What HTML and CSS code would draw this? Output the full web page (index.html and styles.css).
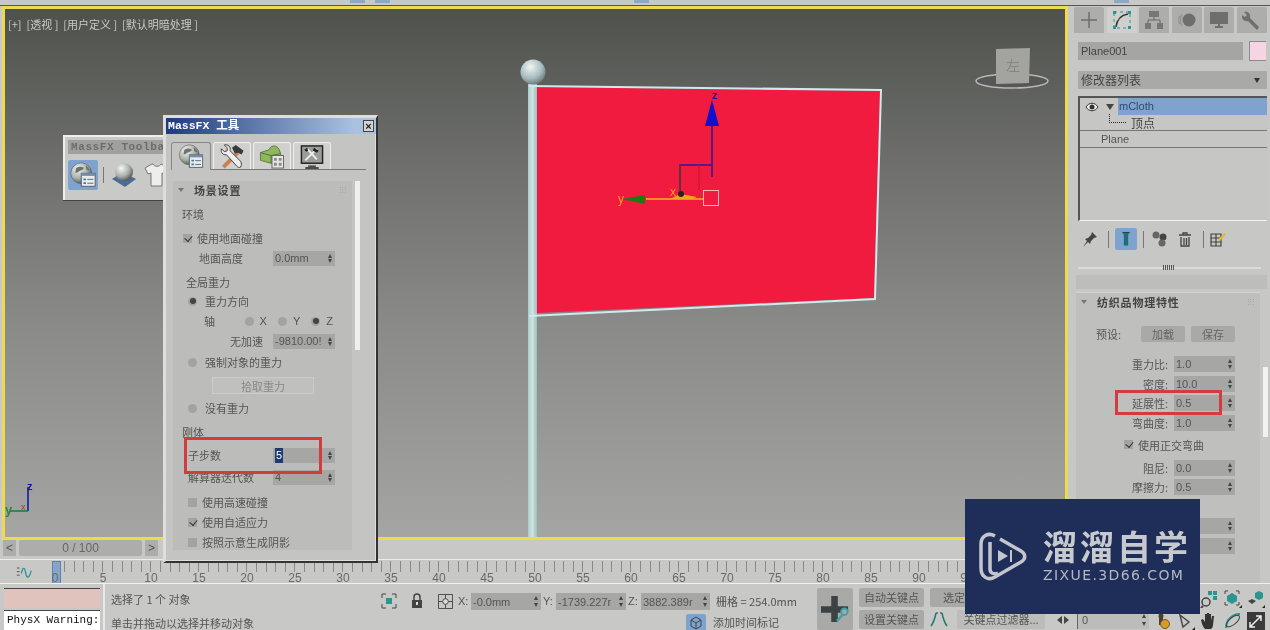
FILE: index.html
```html
<!DOCTYPE html>
<html lang="zh">
<head>
<meta charset="utf-8">
<title>3ds Max MassFX</title>
<link rel="stylesheet" href="styles.css">
</head>
<body>
<svg class="sprite" aria-hidden="true">
  <defs>
    <radialGradient id="gGlobe" cx="35%" cy="30%" r="75%"><stop offset="0" stop-color="#f6f6f4"/><stop offset=".6" stop-color="#a8aea8"/><stop offset="1" stop-color="#4a544e"/></radialGradient>
    <radialGradient id="gBall" cx="40%" cy="30%" r="75%"><stop offset="0" stop-color="#f0f4f4"/><stop offset=".6" stop-color="#a9bcc0"/><stop offset="1" stop-color="#5f7276"/></radialGradient>
    <symbol id="i-globe" viewBox="0 0 30 30">
      <circle cx="13" cy="13" r="12" fill="url(#gGlobe)" stroke="#555" stroke-width=".6"/>
      <path d="M7 7c3-2 6-2 8-1s0 3-3 4-3 3-6 2zM18 4c2 1 4 3 5 6l-4-1z" fill="#6c756c"/>
      <rect x="13" y="13" width="16" height="15" fill="#e8ecef" stroke="#4a5560"/>
      <rect x="13" y="13" width="16" height="3" fill="#6f8db0"/>
      <path d="M15.500 19h3v2h-3zM15.500 23.500h3v2h-3z" fill="#3f7f96"/>
      <path d="M20 20h7M20 24.500h7" stroke="#4a5560"/>
    </symbol>
    <symbol id="i-tools" viewBox="0 0 26 26">
      <path d="M4 24l15-15" stroke="#c87f55" stroke-width="4"/>
      <path d="M13 4l4-3 8 6-2 4-4-2-3 1z" fill="#3a3a3a"/>
      <path d="M22 24c-2 1-3 0-4-1L7 11C4 12 1 9 2 5l3 3 3-1 0-3-3-3c4-1 7 2 6 6l11 11c1 2 1 4 0 6z" fill="#eceeee" stroke="#3a3a3a"/>
    </symbol>
    <symbol id="i-shapes" viewBox="0 0 26 26">
      <path d="M1 9l9-3c1-4 7-6 10-1l2 5v7l-10 3-11-3z" fill="#8fb85c" stroke="#5f7a3c"/>
      <path d="M1 9l11 3 10-2M12 12v8" stroke="#55703a" fill="none"/>
      <rect x="13" y="12" width="12" height="13" fill="#e6e6e4" stroke="#666"/>
      <path d="M15 14.500h3v3h-3zM20 14.500h3v3h-3zM15 19.500h3v3h-3zM20 19.500h3v3h-3z" fill="#8b8b89"/>
    </symbol>
    <symbol id="i-monitor" viewBox="0 0 26 26">
      <rect x="2" y="2" width="22" height="18" fill="#9a9c98" stroke="#222" stroke-width="1.500"/>
      <path d="M6 17l12-12M8 5l10 11" stroke="#eee" stroke-width="2"/>
      <path d="M15 4l5 3-2 2-4-2zM5 6l3-2 1 3-2 1z" fill="#222"/>
      <path d="M9 23h8M6 25h14" stroke="#222" stroke-width="1.500"/>
    </symbol>
    <symbol id="i-shirt" viewBox="0 0 24 26">
      <path d="M8 2L1 6l3 6 3-1v13h11V11l3 1 3-6-7-4c-1 3-7 3-8 0z" fill="#eeeeea" stroke="#777"/>
    </symbol>
    <symbol id="i-floor" viewBox="0 0 26 26">
      <path d="M1 17l11-7 13 7-11 8z" fill="#4c6c96"/>
      <circle cx="13" cy="10" r="9" fill="url(#gGlobe)"/>
    </symbol>
    <symbol id="i-move" viewBox="0 0 16 16"><path d="M1 1h4M1 1v4M15 1h-4M15 1v4M1 15h4M1 15v-4M15 15h-4M15 15v-4" stroke="#444" fill="none"/><rect x="5" y="5" width="6" height="6" fill="#2b9590"/></symbol>
  </defs>
</svg>

<div class="app">
  <div class="topbar">
    <i class="hl hl1"></i><i class="hl hl2"></i><i class="hl hl3"></i><i class="hl hl4"></i>
  </div>

  <div class="work">
    <div class="leftcol">
      <main class="viewport">
        <div class="vp-label">[+]&nbsp; [透视 ]&nbsp; [用户定义 ]&nbsp; [默认明暗处理 ]</div>
        <svg class="scene" viewBox="5 9 1060 528">
          <defs>
            <linearGradient id="gPole" x1="0" x2="1" y1="0" y2="0"><stop offset="0" stop-color="#a9cdcd"/><stop offset=".5" stop-color="#d0e4e2"/><stop offset="1" stop-color="#9dbdbd"/></linearGradient>
          </defs>
          <rect x="528" y="84" width="9" height="460" fill="url(#gPole)"/>
          <circle cx="533" cy="72" r="12.500" fill="url(#gBall)"/>
          <polygon points="537,87 880,91 874,298 537,313" fill="#f01b3e"/>
          <path d="M529 86l352 4-6 209-346 17" fill="none" stroke="#cfe9f0" stroke-width="2"/>
          <path d="M712 126v51M680 191v-26h32" stroke="#2a1a9a" stroke-width="1.500" fill="none"/>
          <path d="M680 165v26" stroke="#6b3a20" stroke-width="1.500"/>
          <path d="M699 165v25" stroke="#c8132e"/>
          <polygon points="712,100 705,126 719,126" fill="#1010d0"/>
          <text x="712" y="99" class="g-z">z</text>
          <path d="M646 199h57" stroke="#f3b21e" stroke-width="1.500"/>
          <polygon points="670,199 680,194 697,197 692,199" fill="#f3a31e"/>
          <polygon points="622,199 645,195 645,204" fill="#1a7a14"/>
          <circle cx="681" cy="194" r="3" fill="#222"/>
          <rect x="703.500" y="190.500" width="15" height="15" fill="none" stroke="#f2bcb4"/>
          <text x="618" y="203" class="g-o">y</text>
          <text x="670" y="196" class="g-o">x</text>
          <ellipse cx="1012" cy="81" rx="36" ry="7" fill="#575757" stroke="#b8b8b4" stroke-width="1.500"/>
          <path d="M996 49l34 -1-1 35-33 1z" fill="#a3a39f"/>
          <text x="1006" y="71" class="g-cube">左</text>
          <path d="M28 511v-24" stroke="#1111aa" stroke-width="1.500"/>
          <path d="M28 511H9" stroke="#1a7a3a" stroke-width="1.500"/>
          <text x="27" y="490" class="g-ax">z</text>
          <text x="5" y="514" class="g-ay">y</text>
          <text x="21" y="510" class="g-ar">x</text>
        </svg>
      </main>
      <div class="slider">
        <span class="sl-btn">&lt;</span>
        <span class="sl-track">0 / 100</span>
        <span class="sl-btn">&gt;</span>
      </div>
      <div class="ruler">
        <svg class="curve" viewBox="0 0 18 14"><path d="M1 2h3M1 6h3M1 10h3" stroke="#444"/><path d="M6 8c2-9 4-6 5 0s4 6 6-3" stroke="#2b9590" fill="none" stroke-width="1.500"/></svg>
        <i class="frame"></i>
        <div class="ticks"></div>
        <div class="nums"><span>0</span><span>5</span><span>10</span><span>15</span><span>20</span><span>25</span><span>30</span><span>35</span><span>40</span><span>45</span><span>50</span><span>55</span><span>60</span><span>65</span><span>70</span><span>75</span><span>80</span><span>85</span><span>90</span><span>95</span></div>
      </div>
    </div>

    <aside class="panel">
      <div class="ptabs">
        <span class="ptab"><svg viewBox="0 0 20 20"><path d="M10 2v16M2 10h16" stroke="#6e6e6c" stroke-width="1.500"/></svg></span>
        <span class="ptab on"><svg viewBox="0 0 20 20"><path d="M2 2h16v16H2z" fill="none" stroke="#2b9590" stroke-dasharray="3 3"/><path d="M4 17C5 9 9 5 16 4" stroke="#333" stroke-width="1.500" fill="none"/><path d="M1 1h3v3H1zM16 1h3v3h-3zM1 16h3v3H1zM16 16h3v3h-3z" fill="#2b9590"/></svg></span>
        <span class="ptab"><svg viewBox="0 0 20 20"><path d="M5 1h10v6H5zM1 13h6v6H1zM13 13h6v6h-6z" fill="#777"/><path d="M10 7v3M4 13v-3h12v3" stroke="#666" fill="none"/></svg></span>
        <span class="ptab"><svg viewBox="0 0 20 20"><circle cx="12" cy="10" r="6.500" fill="#6e6e6c"/><path d="M5 4c-2 4-2 8 0 12M2.500 6c-1 3-1 6 0 8" stroke="#8a8a88" fill="none"/></svg></span>
        <span class="ptab"><svg viewBox="0 0 20 20"><rect x="1" y="2" width="18" height="12" fill="#6e6e6c"/><path d="M6 17h8M10 14v3" stroke="#6e6e6c" stroke-width="2"/></svg></span>
        <span class="ptab"><svg viewBox="0 0 20 20"><path d="M17 17L8 8c1-4-2-7-6-6l3 3-2 2-3-2c-1 4 3 7 6 6l9 9z" fill="#6e6e6c"/></svg></span>
      </div>

      <div class="namerow"><span class="namefield">Plane001</span><span class="swatch"></span></div>
      <div class="modlist"><span>修改器列表</span><i class="caret"></i></div>

      <div class="stack">
        <div class="st-row st-top">
          <svg class="eye" viewBox="0 0 14 10"><path d="M1 5c3-5 9-5 12 0-3 5-9 5-12 0z" fill="#eee" stroke="#333"/><circle cx="7" cy="5" r="2.500" fill="#333"/></svg>
          <i class="tri"></i>
          <span class="st-sel">mCloth</span>
        </div>
        <div class="st-row st-sub"><i class="dots"></i><span>顶点</span></div>
        <div class="st-row st-plane">Plane</div>
      </div>

      <div class="ptools">
        <svg class="pt-pin" viewBox="0 0 16 16"><path d="M10 1l5 5-3 1-3 3-1 3-2-2-5 5 4-6-2-2 3-1 3-3z" fill="#444"/></svg>
        <i class="vsep"></i>
        <span class="ptool-on"><svg viewBox="0 0 16 22"><path d="M3 2h10l-2 3v15H5V5z" fill="#1f6f72"/><path d="M3 2h10" stroke="#222"/></svg></span>
        <i class="vsep"></i>
        <svg class="pt-c" viewBox="0 0 16 16"><circle cx="4" cy="4" r="3.500" fill="#666"/><circle cx="11" cy="6" r="3.500" fill="#444"/><circle cx="10" cy="12" r="3.500" fill="#666"/></svg>
        <svg class="pt-t" viewBox="0 0 16 16"><path d="M2 4h12M6 4V2h4v2M4 6v9h8V6M7 7v7M9.500 7v7" stroke="#444" fill="none" stroke-width="1.300"/></svg>
        <i class="vsep vsep-e"></i>
        <svg viewBox="0 0 16 16"><path d="M1 3h10v12H1zM1 7h10M1 11h10M6 3v12" stroke="#444" fill="none" stroke-width="1.200"/><path d="M8 9l6-7 2 1-6 7z" fill="#e6b91e"/></svg>
      </div>

      <div class="handle"><i></i></div>
      <div class="rollstub"></div>

      <div class="scroller">
        <section class="props">
          <h3 class="roll-h"><i class="tri-s"></i>纺织品物理特性<i class="grip"></i></h3>
          <div class="preset"><span>预设:</span><button class="pbtn">加载</button><button class="pbtn">保存</button></div>
          <div class="pgrid">
            <label>重力比:</label><span class="spin">1.0</span>
            <label>密度:</label><span class="spin">10.0</span>
            <label>延展性:</label><span class="spin">0.5</span>
            <label>弯曲度:</label><span class="spin">1.0</span>
            <div class="pcheck"><i class="chk on"></i>使用正交弯曲</div>
            <label>阻尼:</label><span class="spin">0.0</span>
            <label>摩擦力:</label><span class="spin">0.5</span>
            <label></label><span class="spin"></span>
            <label></label><span class="spin"></span>
          </div>
        </section>
        <i class="sbar"></i>
      </div>
      <i class="redbox redbox-panel"></i>
    </aside>
  </div>

  <footer class="status">
    <div class="logs"><div class="pink"></div><div class="warn">PhysX Warning:</div></div>
    <div class="msgs"><div>选择了 1 个 对象</div><div>单击并拖动以选择并移动对象</div></div>
    <div class="coords">
      <div class="c-top">
        <svg class="ic14 c-sel"><use href="#i-move"/></svg>
        <svg class="c-lock" viewBox="0 0 12 16"><path d="M3 7V4a3 3 0 0 1 6 0v3" fill="none" stroke="#444" stroke-width="1.500"/><rect x="1" y="7" width="10" height="8" fill="#444"/><rect x="5" y="9" width="2" height="3" fill="#ddd"/></svg>
        <svg class="c-abs" viewBox="0 0 16 16"><path d="M.5.500h15v15H.5zM8 1v14M1 8h14" stroke="#444" fill="none"/><circle cx="8" cy="8" r="3" fill="#ddd" stroke="#444"/></svg>
        <span class="c-l">X:</span><span class="spin cf cfx">-0.0mm</span>
        <span class="c-l cly">Y:</span><span class="spin cf cfy">-1739.227r</span>
        <span class="c-l clz">Z:</span><span class="spin cf cfz">3882.389r</span>
        <span class="grid">栅格 = 254.0mm</span>
      </div>
      <div class="c-bot">
        <span class="tagbtn"><svg viewBox="0 0 14 14"><path d="M7 1l5 3v6l-5 3-5-3V4zM2 4l5 3 5-3M7 7v6" stroke="#444" fill="none"/></svg></span>
        <span>添加时间标记</span>
      </div>
    </div>
    <div class="keybig"><svg viewBox="0 0 30 30"><path d="M11 1h7v11h11v7H18v10h-7V19H0v-7h11z" fill="#3c4144"/><path d="M17 28l7-8" stroke="#3fa0a8" stroke-width="2.500"/><circle cx="25" cy="18" r="3.500" fill="#a9a9a7" stroke="#3fa0a8" stroke-width="2"/></svg></div>
    <div class="keys">
      <div class="k-row"><span class="kbtn">自动关键点</span><span class="kbtn k2">选定对象</span></div>
      <div class="k-row"><span class="kbtn">设置关键点</span>
        <svg class="kicon" viewBox="0 0 18 18"><path d="M6 2c-1 5-2 9-5 13M12 2c1 5 2 9 5 13" stroke="#1f7a74" stroke-width="1.500" fill="none"/><path d="M6 2h6" stroke="#333" stroke-dasharray="2 2"/></svg>
        <span class="kbtn k3">关键点过滤器...</span>
        <span class="karrows"><i class="al"></i><i class="ar"></i></span>
        <span class="spin kspin">0</span>
      </div>
    </div>
    <div class="navs">
      <svg class="nav-first" viewBox="0 0 18 18"><circle cx="6" cy="12" r="4" fill="none" stroke="#444" stroke-width="1.500"/><path d="M3 16l-2 2" stroke="#444" stroke-width="2"/><path d="M8 1h4v4H8zM13 1h4v4h-4zM13 6h4v4h-4z" fill="#2b9590"/></svg>
      <svg viewBox="0 0 18 18"><path d="M1 1h3M1 1v3M15 1h-3M15 1v3M1 15h3M1 15v-3M15 15h-3M15 15v-3" stroke="#444" fill="none"/><path d="M8 3l5 3v5l-5 3-5-3V6z" fill="#2b9590"/><path d="M18 15v3h-3z" fill="#222"/></svg>
      <svg viewBox="0 0 18 18"><path d="M12 1l4 2v5l-4 2-4-2V3z" fill="#2b9590"/><path d="M1 11l4-2 4 2-4 3z" fill="#444"/><path d="M18 15v3h-3z" fill="#222"/></svg>
      <svg viewBox="0 0 18 18"><circle cx="8" cy="4" r="2.500" fill="#4a3f35"/><rect x="6" y="5" width="4" height="8" fill="#4a3f35"/><circle cx="12" cy="12" r="4.500" fill="#d69b2a" stroke="#7a5a20"/></svg>
      <svg viewBox="0 0 18 18"><path d="M3 3l9 7-6 5z" fill="none" stroke="#444" stroke-width="1.400"/><path d="M18 15v3h-3z" fill="#222"/></svg>
      <svg viewBox="0 0 18 18"><path d="M5 17c-3-3-3-6-4-9l2-1 2 3V2h2v6V1h2v7V2h2v7l1-5h2l-1 9c0 2-1 3-2 4z" fill="#333"/></svg>
      <svg viewBox="0 0 18 18"><path d="M2 16C2 8 8 2 16 2" stroke="#2b9590" stroke-width="2" fill="none"/><ellipse cx="9" cy="9" rx="8" ry="3.500" fill="none" stroke="#444" transform="rotate(-40 9 9)"/></svg>
      <svg viewBox="0 0 18 18"><rect width="18" height="18" fill="#3a3a3a"/><path d="M3 15L14 4M9 4h5v5M3 10v5h5" stroke="#eee" stroke-width="1.500" fill="none"/></svg>
    </div>
  </footer>

  <div class="toolbar">
    <div class="tb-title">MassFX Toolbar</div>
    <div class="tb-icons">
      <span class="tb-on"><svg><use href="#i-globe"/></svg></span>
      <i class="tb-sep"></i>
      <svg class="tb-i"><use href="#i-floor"/></svg>
      <svg class="tb-i tb-sh"><use href="#i-shirt"/></svg>
    </div>
  </div>

  <div class="dialog">
    <div class="dl-title"><span>MassFX 工具</span><span class="dl-x">×</span></div>
    <div class="dl-tabs">
      <span class="dtab on"><svg class="dti"><use href="#i-globe"/></svg></span>
      <span class="dtab"><svg class="dti"><use href="#i-tools"/></svg></span>
      <span class="dtab"><svg class="dti"><use href="#i-shapes"/></svg></span>
      <span class="dtab"><svg class="dti"><use href="#i-monitor"/></svg></span>
    </div>
    <div class="dl-body">
      <div class="dl-panel">
        <h3 class="roll-h"><i class="tri-s"></i>场景设置<i class="grip"></i></h3>
        <div class="dl-grid">
          <div>环境</div>
          <div class="row i1"><i class="chk on"></i>使用地面碰撞</div>
          <div class="row i4">地面高度<span class="spin ds">0.0mm</span></div>
          <div class="row i2">全局重力</div>
          <div class="row i3"><i class="rad on"></i>重力方向</div>
          <div class="row i5">轴<span class="axes"><i class="rad"></i>X<i class="rad"></i>Y<i class="rad on"></i>Z</span></div>
          <div class="row i6">无加速<span class="spin ds">-9810.00!</span></div>
          <div class="row i3"><i class="rad"></i>强制对象的重力</div>
          <div class="row i7"><span class="dbtn">拾取重力</span></div>
          <div class="row i3"><i class="rad"></i>没有重力</div>
          <div>刚体</div>
          <div class="row i3b">子步数<span class="spin ds"><b class="sel">5</b></span></div>
          <div class="row i3b">解算器迭代数<span class="spin ds">4</span></div>
          <div class="row i3b"><i class="chk"></i>使用高速碰撞</div>
          <div class="row i3b"><i class="chk on"></i>使用自适应力</div>
          <div class="row i3b"><i class="chk"></i>按照示意生成阴影</div>
        </div>
      </div>
      <i class="dl-sbar"></i>
    </div>
    <i class="redbox redbox-dl"></i>
  </div>

  <div class="logo">
    <svg class="logo-i" viewBox="0 0 50 52"><path d="M17 5C10 1 3 5 3 13V37C3 46 10 50 17 46L43 31C48 28 48 23 43 20L22 8" fill="none" stroke="#c3c6cc" stroke-width="3.500"/><path d="M12 11V38C12 42 16 44 20 42" fill="none" stroke="#c3c6cc" stroke-width="3.500"/><path d="M20 19l10 6-10 6z" fill="#c3c6cc"/><path d="M33 19v12" stroke="#c3c6cc" stroke-width="2"/></svg>
    <div class="logo-t"><div class="logo-cn">溜溜自学</div><div class="logo-en">ZIXUE.3D66.COM</div></div>
  </div>
</div>
</body>
</html>
```

FILE: styles.css
```css
* { box-sizing: border-box; }
html, body { margin: 0; height: 100%; overflow: hidden; }
body { background: #c8c8c6; font: 11px/14px "Noto Sans CJK SC", "Liberation Sans", sans-serif; color: #555; }
.sprite { position: absolute; width: 0; height: 0; }

.app { position: relative; width: 1270px; height: 630px; overflow: hidden; display: flex; flex-direction: column; background: #c8c8c6; filter: blur(.35px); }

/* top strip */
.topbar { height: 6px; flex: none; display: flex; background: #c8c8c6; border-bottom: 1px solid #555; }
.hl { height: 3px; width: 15px; background: #8ea8c8; display: block; }
.hl1 { margin-left: 350px; } .hl2 { margin-left: 10px; } .hl3 { margin-left: 244px; } .hl4 { margin-left: 465px; }

.work { display: flex; height: 577px; flex: none; }
.leftcol { width: 1068px; flex: none; display: flex; flex-direction: column; }

/* viewport */
.viewport { position: relative; height: 534px; flex: none; border: 3px solid #eeda4e; margin-left: 2px; background: linear-gradient(#4f514d 0, #6f706d 30%, #8a8a88 60%, #a5a5a3 100%); overflow: hidden; }
.vp-label { position: absolute; left: 3px; top: 8px; color: #c8c8c4; font-size: 11px; line-height: 14px; z-index: 1; }
.scene { position: absolute; inset: 0; width: 100%; height: 100%; }
.scene text { font-family: "Liberation Sans", sans-serif; }
.g-z { fill: #1a1a8a; font-size: 11px; font-weight: 700; }
.g-o { fill: #f2a21e; font-size: 12px; }
.scene .g-cube { fill: #86867f; font-size: 14px; font-family: "Noto Sans CJK SC", sans-serif; }
.g-ax { fill: #1111aa; font-size: 11px; font-weight: 700; }
.g-ay { fill: #2a8a3a; font-size: 13px; font-weight: 700; }
.g-ar { fill: #c03030; font-size: 9px; }

/* time slider */
.slider { height: 19px; flex: none; display: flex; align-items: flex-start; gap: 3px; padding-left: 3px; font: 11px "Liberation Sans", sans-serif; color: #555; }
.sl-btn { width: 13px; height: 16px; background: #adadab; text-align: center; line-height: 16px; font-size: 12px; }
.sl-track { width: 123px; height: 16px; background: #adadab; text-align: center; line-height: 16px; border-radius: 2px; font-size: 12px; color: #666; }

/* ruler */
.ruler { position: relative; height: 25px; flex: none; border-top: 1px solid #ececea; }
.curve { position: absolute; left: 16px; top: 6px; width: 16px; height: 13px; }
.frame { position: absolute; left: 52px; top: 1px; width: 9px; height: 24px; background: #86a4c8; border: 1px solid #5f82ac; }
.ticks { position: absolute; left: 64px; right: 0; top: 1px; height: 11px; background: repeating-linear-gradient(90deg, #8a8a88 0 1px, transparent 1px 9.6px); }
.nums { position: absolute; left: 31px; top: 11px; display: flex; font: 12px/14px "Liberation Sans", sans-serif; color: #6a6a68; }
.nums span { width: 48px; text-align: center; flex: none; }

/* command panel */
.panel { position: relative; width: 202px; flex: none; background: #c7c7c5; padding: 1px 0 0 6px; display: flex; flex-direction: column; }
.ptabs { display: grid; grid-template-columns: repeat(6, 30px); gap: 2.500px; height: 26px; flex: none; }
.ptab { background: #adadab; display: flex; align-items: center; justify-content: center; border-radius: 2px 2px 0 0; }
.ptab svg { width: 20px; height: 20px; }
.ptab.on { background: #cfcfcd; }
.namerow { display: flex; margin-top: 8px; height: 20px; gap: 6px; padding-left: 4px; flex: none; }
.namefield { width: 165px; height: 18px; margin-top: 1px; background: #a5a5a3; font: 11px/18px "Liberation Sans", sans-serif; padding-left: 3px; color: #444; }
.swatch { width: 17px; height: 20px; background: #f6d4e4; border: 1px solid #8b8b89; border-width: 1px 0 1px 1px; }
.modlist { margin: 10px 0 0 4px; width: 189px; height: 18px; background: #a9a9a7; flex: none; font-size: 12px; line-height: 18px; padding-left: 3px; color: #444; position: relative; }
.caret { position: absolute; right: 7px; top: 7px; border: 3px solid transparent; border-top: 5px solid #333; border-bottom: 0; }
.stack { margin: 7px 0 0 4px; width: 189px; height: 125px; flex: none; border: 2px solid #555; border-width: 2px 0 2px 2px; border-bottom: 1px solid #f2f2f0; background: #c6c6c4; }
.st-row { display: flex; align-items: center; }
.st-top { height: 17px; padding-left: 5px; }
.eye { width: 14px; height: 10px; }
.tri { margin-left: 7px; border: 4px solid transparent; border-top: 6px solid #444; border-bottom: 0; }
.st-sel { margin-left: 4px; flex: 1; background: #7fa3cf; height: 17px; font: 11px/17px "Liberation Sans", sans-serif; color: #2e4a6e; padding-left: 1px; }
.st-sub { height: 16px; border-bottom: 1px solid #777; padding-left: 29px; font-size: 12px; color: #444; }
.dots { width: 17px; height: 9px; margin-right: 5px; margin-top: -8px; border-left: 1px dotted #222; border-bottom: 1px dotted #222; }
.st-plane { height: 17px; border-bottom: 1px solid #777; padding-left: 21px; font: 11px/16px "Liberation Sans", sans-serif; color: #555; }
.ptools { display: flex; align-items: center; height: 24px; margin-top: 6px; padding-left: 8px; gap: 6px; flex: none; }
.ptools svg { width: 16px; height: 16px; flex: none; }
.ptools .pt-pin { margin-right: 4px; }
.ptools .pt-c { margin-left: 2px; }
.ptools .pt-t { margin-left: 3px; }
.vsep { width: 1px; height: 17px; background: #777; flex: none; }
.vsep-e { margin-left: 4px; }
.ptool-on { width: 22px; height: 22px; background: #7fa3cf; display: flex; align-items: center; justify-content: center; border-radius: 2px; }
.handle { height: 2px; margin: 16px 9px 0 4px; background: #dcdcda; position: relative; flex: none; }
.handle i { position: absolute; left: 85px; top: -2px; width: 12px; height: 5px; background: repeating-linear-gradient(90deg, #555 0 1px, transparent 1px 2px); }
.rollstub { height: 14px; margin: 6px 3px 0 2px; background: #bdbdbb; flex: none; }
.scroller { display: flex; flex: 1; margin-top: 3px; min-height: 0; }
.props { width: 184px; margin-left: 2px; flex: none; background: #bfbfbd; border-top: 1px solid #d4d4d2; position: relative; }
.sbar { width: 5px; height: 70px; background: #f2f2f0; margin: 75px 0 0 3px; flex: none; }
.roll-h { margin: 0; height: 18px; display: flex; align-items: center; font-size: 11px; font-weight: 700; letter-spacing: .8px; color: #444; position: relative; }
.props .roll-h { height: 17px; }
.tri-s { margin: 0 10px 0 5px; border: 3px solid transparent; border-top: 4px solid #777; border-bottom: 0; }
.grip { position: absolute; right: 6px; top: 5px; width: 7px; height: 7px; background: radial-gradient(#999 40%, transparent 45%) 0 0 / 2.500px 2.500px; }
.preset { display: flex; align-items: center; height: 16px; margin-top: 16px; padding-left: 20px; }
.pbtn { width: 44px; height: 16px; margin-left: 6px; padding: 0; border: 0; background: #a9a9a7; border-radius: 2px; color: #666; font: 11px/16px "Noto Sans CJK SC", sans-serif; }
.preset span { width: 39px; }
.pgrid { display: grid; grid-template-columns: 92px 61px; column-gap: 6px; grid-template-rows: 30px 19.500px 19.500px 19.500px 22px 23px 19px 39px 20px; align-items: end; }
.pgrid label { text-align: right; white-space: nowrap; line-height: 16px; }
.pcheck { grid-column: 1 / 3; padding-left: 48px; display: flex; align-items: center; gap: 5px; height: 16px; }

/* shared widgets */
.spin { position: relative; display: block; height: 16px; background: #a6a6a4; font: 11px/16px "Liberation Sans", sans-serif; color: #555; padding-left: 2px; white-space: nowrap; overflow: hidden; }
.spin::before, .spin::after { content: ""; position: absolute; right: 3px; border: 2.500px solid transparent; }
.spin::before { top: 3px; border-bottom: 4px solid #444; border-top: 0; }
.spin::after { bottom: 3px; border-top: 4px solid #444; border-bottom: 0; }
.chk { display: inline-block; flex: none; width: 9px; height: 9px; background: #a3a3a1; position: relative; }
.chk.on::after { content: ""; position: absolute; left: 2.500px; top: 0; width: 3.500px; height: 6px; border: solid #333; border-width: 0 1.500px 1.500px 0; transform: rotate(40deg); }
.rad { display: inline-block; flex: none; width: 9px; height: 9px; border-radius: 50%; background: #a3a3a1; position: relative; }
.rad.on::after { content: ""; position: absolute; left: 1.500px; top: 1.500px; width: 6px; height: 6px; border-radius: 50%; background: #444; }
.redbox { position: absolute; border: 3px solid #d23c3c; display: block; pointer-events: none; }
.redbox-panel { left: 47px; top: 384px; width: 107px; height: 25px; }
.redbox-dl { left: 18px; top: 319px; width: 138px; height: 37px; }

/* status bar */
.status { flex: 1; display: flex; border-top: 1px solid #f0f0ee; background: #c8c8c6; position: relative; }
.logs { width: 105px; flex: none; padding: 4px 0 0 4px; border-right: 2px solid #e8e8e6; }
.pink { width: 96px; height: 20px; background: #e0c3bd; border-top: 1px solid #444; }
.warn { width: 96px; height: 20px; margin-top: 2px; background: #fff; border-top: 1px solid #444; font: 11px/19px "Liberation Mono", monospace; color: #111; padding-left: 3px; white-space: nowrap; overflow: hidden; }
.msgs { width: 268px; flex: none; padding: 8px 0 0 6px; display: flex; flex-direction: column; gap: 10px; }
.coords { width: 440px; flex: none; }
.c-top { height: 28px; padding-top: 6px; display: flex; align-items: center; font: 11px "Liberation Sans", sans-serif; }
.ic14 { width: 16px; height: 16px; }
.c-sel { margin-left: 8px; flex: none; }
.c-lock { width: 12px; height: 16px; margin-left: 14px; flex: none; }
.c-abs { width: 15px; height: 15px; margin-left: 15px; flex: none; }
.c-l { margin-left: 5px; width: 13px; flex: none; }
.cly { margin-left: 2px; } .clz { margin-left: 2px; }
.cf { height: 17px; line-height: 18px; flex: none; }
.cfx { width: 70px; } .cfy { width: 70px; } .cfz { width: 69px; }
.grid { margin-left: 6px; white-space: nowrap; font-family: "Noto Sans CJK SC", sans-serif; font-size: 11px; }
.c-bot { display: flex; align-items: center; padding-left: 313px; gap: 7px; height: 19px; }
.tagbtn { width: 20px; height: 18px; background: #7fa3cf; display: flex; align-items: center; justify-content: center; border-radius: 2px; margin-top: 2px; }
.tagbtn svg { width: 14px; height: 14px; }
.keybig { width: 36px; height: 42px; margin: 4px 0 0 4px; background: #a9a9a7; flex: none; display: flex; align-items: center; justify-content: center; border-radius: 2px; }
.keybig svg { width: 28px; height: 28px; }
.keys { width: 341px; flex: none; padding: 4px 0 0 6px; display: flex; flex-direction: column; gap: 3px; }
.k-row { display: flex; align-items: center; height: 19px; }
.kbtn { width: 65px; height: 19px; background: #a9a9a7; text-align: center; line-height: 19px; border-radius: 2px; white-space: nowrap; flex: none; }
.k2 { margin-left: 6px; width: 70px; }
.kicon { width: 18px; height: 18px; margin-left: 6px; flex: none; }
.k3 { margin-left: 9px; width: 88px; background: #bcbcba; }
.karrows { display: flex; gap: 2px; margin-left: 12px; flex: none; }
.al { border: 4px solid transparent; border-right: 5px solid #444; border-left: 0; }
.ar { border: 4px solid transparent; border-left: 5px solid #444; border-right: 0; }
.kspin { width: 72px; margin-left: 8px; flex: none; height: 18px; line-height: 18px; border-left: 1px solid #666; background: #bcbcba; padding-left: 4px; }
.navs { display: grid; grid-template-columns: repeat(5, 18px); gap: 4px 5.600px; position: absolute; left: 1153px; top: 6px; }
.navs svg { width: 18px; height: 18px; }
.navs .nav-first { grid-column-start: 3; }

/* floating MassFX toolbar */
.toolbar { position: absolute; left: 63px; top: 135px; width: 110px; height: 65px; background: #c9c9c7; border: 1px solid #efefed; border-width: 2px 0 0 2px; box-shadow: 0 1px 0 #444; padding: 3px 0 0 3px; z-index: 2; }
.tb-title { width: 100%; height: 14px; background: #a0a09e; font: 700 11px/14px "Liberation Mono", monospace; color: #6c6c6a; letter-spacing: .6px; white-space: nowrap; overflow: hidden; padding-left: 3px; }
.tb-icons { display: flex; align-items: center; margin-top: 6px; }
.tb-on { width: 30px; height: 30px; background: #7fa3cf; border-radius: 2px; display: block; padding: 2px; }
.tb-on svg { width: 26px; height: 26px; }
.tb-sep { width: 1px; height: 16px; background: #777; margin: 0 7px 0 5px; }
.tb-i { width: 26px; height: 26px; flex: none; }
.tb-sh { margin-left: 6px; }

/* MassFX dialog */
.dialog { position: absolute; left: 163px; top: 115px; width: 215px; height: 448px; background: #c4c4c2; border: 3px solid #dededc; border-right: 2px solid #333; border-bottom: 2px solid #333; z-index: 3; box-shadow: inset -1px -1px 0 #dededc; }
.dl-title { height: 16px; background: linear-gradient(90deg, #1d3a7e, #a9c2de 90%); display: flex; justify-content: space-between; align-items: center; font: 700 11.500px/16px "Liberation Mono", "Noto Sans CJK SC", monospace; color: #fff; padding-left: 2px; }
.dl-x { width: 11px; height: 12px; margin-right: 2px; background: #d4d4d2; border: 1px solid #444; color: #222; font: 700 11px/10px "Liberation Sans", sans-serif; text-align: center; }
.dl-tabs { display: flex; gap: 2px; margin: 8px 10px 0 5px; height: 28px; border-bottom: 1px solid #777; }
.dtab { width: 38px; height: 27px; background: #d0d0ce; border: 1px solid #efefed; border-bottom: 0; border-radius: 3px 3px 0 0; display: flex; align-items: center; justify-content: center; }
.dtab.on { background: #c4c4c2; border-color: #888; height: 28px; width: 40px; }
.dti { width: 28px; height: 25px; }
.dl-body { display: flex; margin: 11px 0 0 7px; height: 369px; }
.dl-panel { width: 179px; height: 369px; background: #bcbcba; overflow: hidden; flex: none; }
.dl-sbar { width: 5px; height: 169px; background: #efefed; margin-left: 3px; flex: none; }
.dl-grid { display: grid; grid-template-rows: 23px 24px 20px 24px 19px 20px 20px 21px 23px 23px 24px 23px 22px 25px 20px 20px; padding: 0 17px 0 9px; align-items: end; }
.dl-grid > div { line-height: 16px; white-space: nowrap; }
.row { display: flex; align-items: center; gap: 5px; height: 16px; }
.i1 { padding-left: 1px; } .i2 { padding-left: 4px; } .i3 { padding-left: 6px; gap: 8px; } .i3b { padding-left: 6px; } .i4 { padding-left: 17px; } .i5 { padding-left: 22px; } .i6 { padding-left: 48px; } .i7 { padding-left: 30px; }
.ds { width: 62px; margin-left: auto; height: 15px; line-height: 15px; }
.axes { margin-left: auto; width: 84px; display: flex; align-items: center; gap: 6px; font: 11px "Liberation Sans", sans-serif; justify-content: flex-end; padding-right: 2px; }
.axes .rad { margin-left: 5px; }
.dbtn { width: 102px; height: 17px; line-height: 17px; text-align: center; background: #c0c0be; border: 1px solid #cbcbc9; color: #888; }
.sel { display: inline-block; background: #1f3a70; color: #fff; font-weight: 400; width: 8px; padding-left: 1px; }

/* watermark */
.logo { position: absolute; left: 965px; top: 499px; width: 235px; height: 115px; background: #1f2e59; display: flex; z-index: 4; }
.logo-i { width: 50px; height: 52px; margin: 32px 0 0 13px; flex: none; }
.logo-t { margin: 28px 0 0 15px; color: #c6c9ce; }
.logo-cn { font: 700 34px/38px "Noto Sans CJK SC", sans-serif; letter-spacing: 3px; white-space: nowrap; }
.logo-en { font: 14px/16px "DejaVu Sans", sans-serif; letter-spacing: 1.400px; margin-top: 2px; white-space: nowrap; color: #b4b9c4; }
```
